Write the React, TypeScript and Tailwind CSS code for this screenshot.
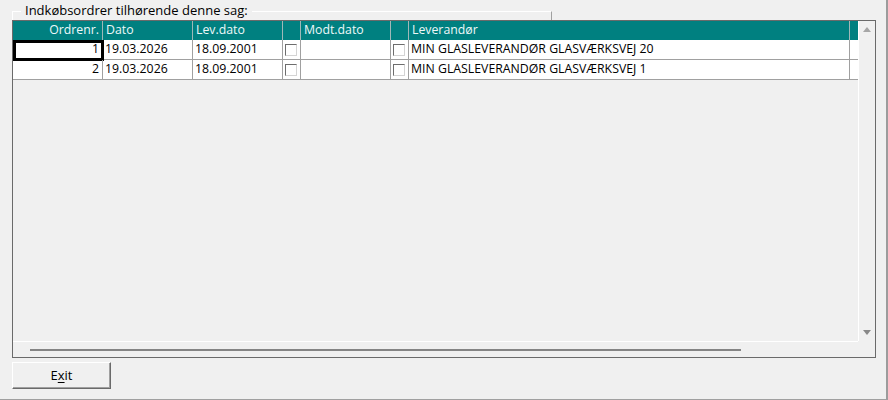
import React from 'react'

type Row = {
  nr: number
  dato: string
  levDato: string
  modtDato: string
  leverandor: string
}

const rows: Row[] = [
  { nr: 1, dato: '19.03.2026', levDato: '18.09.2001', modtDato: '', leverandor: 'MIN GLASLEVERANDØR GLASVÆRKSVEJ 20' },
  { nr: 2, dato: '19.03.2026', levDato: '18.09.2001', modtDato: '', leverandor: 'MIN GLASLEVERANDØR GLASVÆRKSVEJ 1' },
]

function CheckBox() {
  return (
    <div className="h-[12px] w-[12px] border border-t-[#6d6d6d] border-l-[#6d6d6d] border-r-[#d4d4d4] border-b-[#d4d4d4] bg-white" />
  )
}

function HeaderRow() {
  const cell = 'h-full border-r border-[#9fb8b8] px-[3px] flex items-center'
  return (
    <div className="flex h-[19px] bg-[#008080] text-[#eef8f8]">
      <div className={`${cell} w-[90px] justify-end`}>Ordrenr.</div>
      <div className={`${cell} w-[90px]`}>Dato</div>
      <div className={`${cell} w-[90px]`}>Lev.dato</div>
      <div className={`${cell} w-[18px]`} />
      <div className={`${cell} w-[90px]`}>Modt.dato</div>
      <div className={`${cell} w-[18px]`} />
      <div className={`${cell} w-[441px]`}>Leverandør</div>
      <div className="h-full w-[8px]" />
    </div>
  )
}

function DataRow({ row, selected }: { row: Row; selected?: boolean }) {
  const cell = 'h-full border-r border-[#a0a0a0] px-[2px] flex items-center'
  return (
    <div className="flex h-[20px] border-b border-[#a0a0a0] bg-white text-black">
      <div className={`${cell} relative w-[90px] justify-end pr-[3px]`}>
        {row.nr}
        {selected && (
          <div className="absolute left-0 top-0 right-[-2px] bottom-[-2px] border-[3px] border-black" />
        )}
      </div>
      <div className={`${cell} w-[90px]`}>{row.dato}</div>
      <div className={`${cell} w-[90px]`}>{row.levDato}</div>
      <div className={`${cell} w-[18px]`}>
        <CheckBox />
      </div>
      <div className={`${cell} w-[90px]`}>{row.modtDato}</div>
      <div className={`${cell} w-[18px]`}>
        <CheckBox />
      </div>
      <div className={`${cell} w-[441px]`}>{row.leverandor}</div>
      <div className="h-full w-[8px]" />
    </div>
  )
}

export default function App() {
  return (
    <div className="flex h-[400px] w-[888px] flex-col border-r-2 border-b border-r-[#9c9c9c] border-b-[#a0a0a0] bg-[#f0f0f0] font-['Segoe_UI','Open_Sans',sans-serif] text-[12.3px] leading-none text-black">
      {/* group box caption */}
      <div className="relative h-[20px]">
        <div className="ml-[12px] mt-[11px] h-[9px] w-[540px] border-t border-l border-r border-t-white border-l-white border-r-[#a0a0a0]" />
        <span className="absolute left-[21px] top-[3px] bg-[#f0f0f0] px-[4px] text-[13px] leading-[15px]">
          Indkøbsordrer tilhørende denne sag:
        </span>
      </div>

      {/* grid */}
      <div className="ml-[12px] flex h-[338px] w-[864px] flex-col border border-[#6a6a6a]">
        <div className="flex h-[320px]">
          <div className="flex w-[845px] flex-col">
            <HeaderRow />
            {rows.map((r, i) => (
              <DataRow key={r.nr} row={r} selected={i === 0} />
            ))}
          </div>
          <div className="flex w-[17px] flex-col justify-between border-l border-white">
            <div className="flex h-[17px] items-center justify-center">
              <div className="h-0 w-0 border-x-[4px] border-b-[5px] border-x-transparent border-b-[#a6a6a6]" />
            </div>
            <div className="flex h-[17px] items-center justify-center">
              <div className="h-0 w-0 border-x-[4px] border-t-[5px] border-x-transparent border-t-[#888888]" />
            </div>
          </div>
        </div>
        <div className="flex h-[16px]">
          <div className="flex w-[845px] items-center border-t border-white pl-[17px]">
            <div className="h-[2px] w-[711px] bg-[#858585]" />
          </div>
          <div className="w-[17px]" />
        </div>
      </div>

      {/* exit button */}
      <button className="ml-[12px] mt-[4px] flex h-[27px] w-[99px] items-center justify-center border border-t-white border-l-white border-r-[#6a6a6a] border-b-[#6a6a6a] bg-[#f0f0f0] shadow-[inset_-1px_-1px_0_#a0a0a0] text-[13px]">
        <span>
          E<span className="underline underline-offset-2">x</span>it
        </span>
      </button>
    </div>
  )
}
